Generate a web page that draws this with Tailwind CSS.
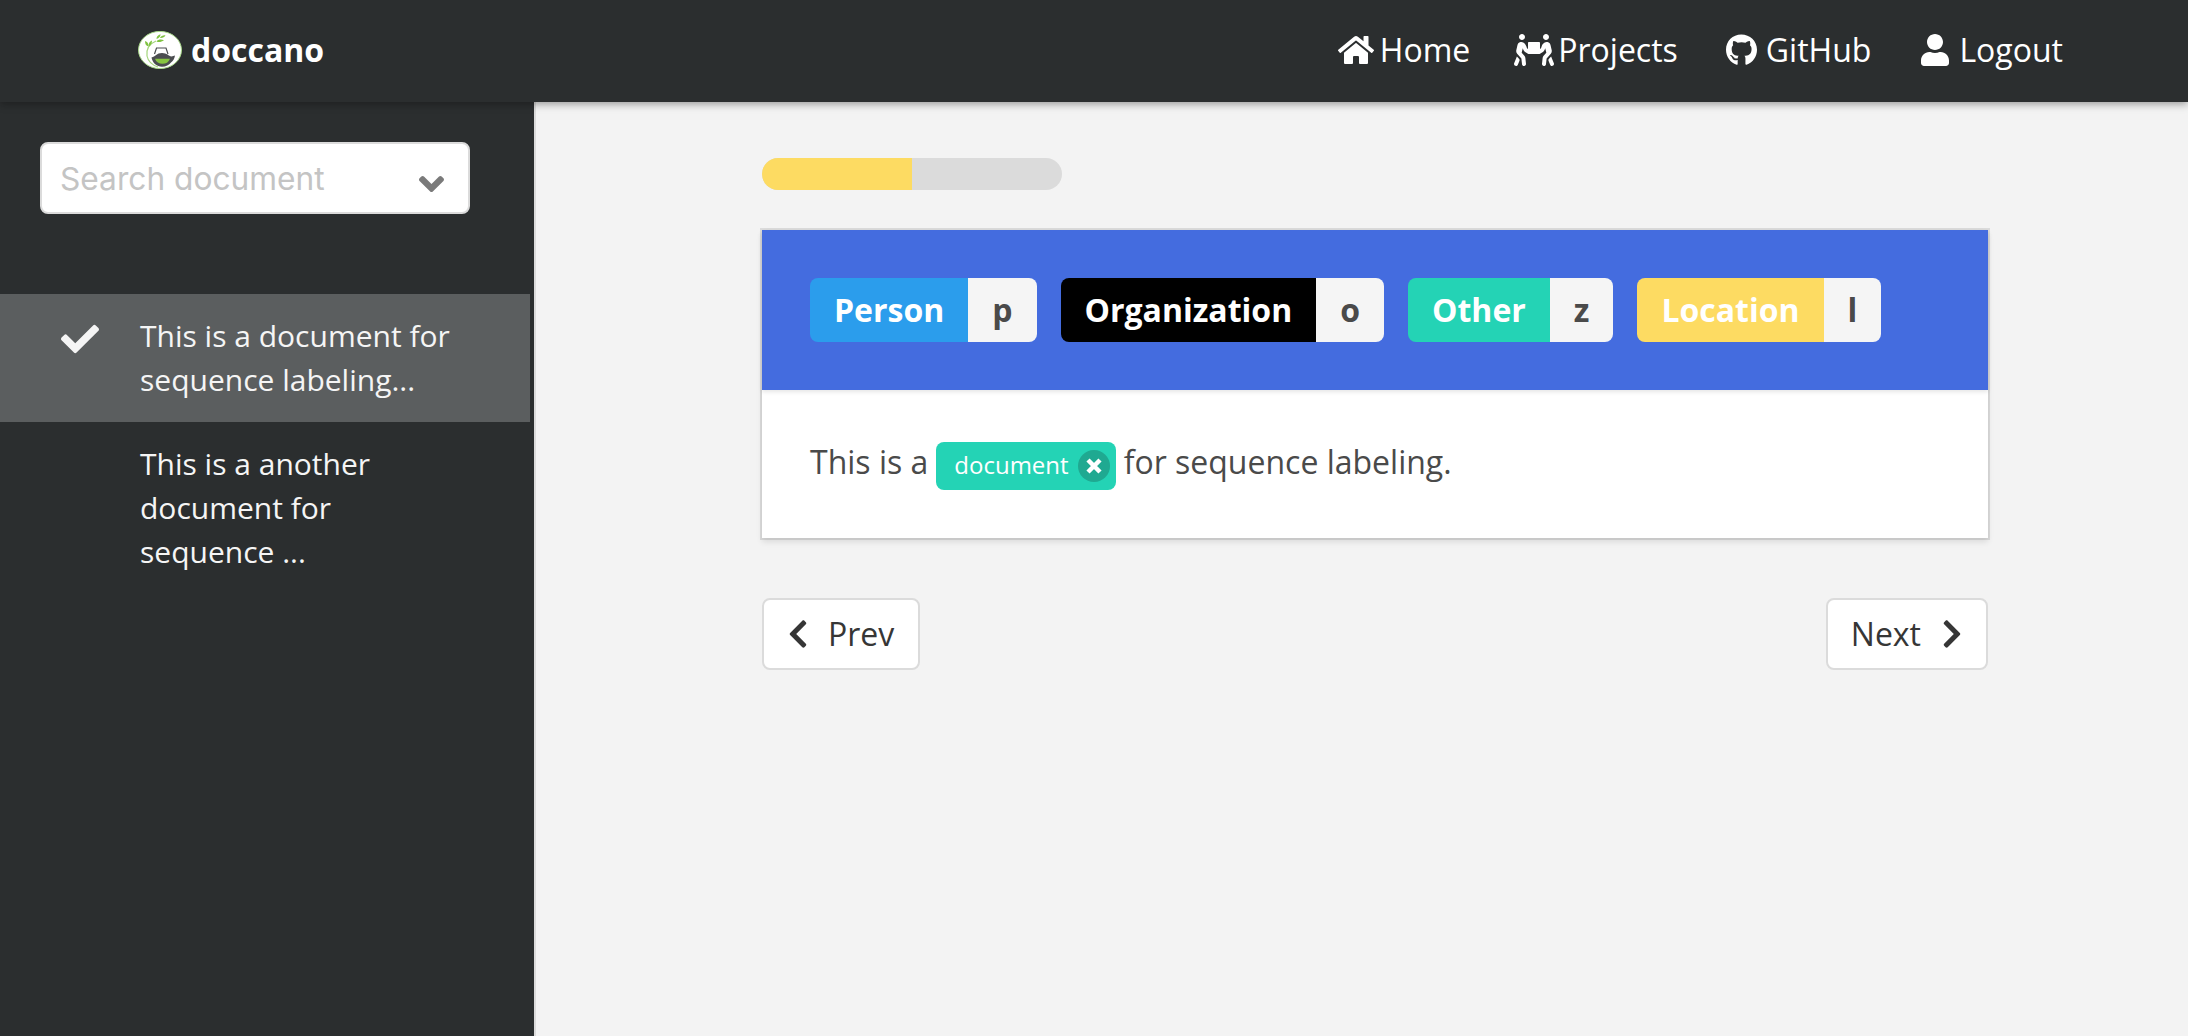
<!DOCTYPE html>
<html lang="en">
<head>
<meta charset="utf-8">
<title>doccano</title>
<script src="https://cdn.jsdelivr.net/npm/@tailwindcss/browser@4"></script>
</head>
<body class="flex h-[1036px] flex-col overflow-hidden bg-[#f3f3f3] font-['Open_Sans',sans-serif] text-[32px] leading-[48px] text-[#4a4a4a]">
  <header class="relative z-10 flex h-[102px] shrink-0 items-center justify-between bg-[#2b2e2f] pr-[125px] pb-[2px] pl-[138px] text-white shadow-[0_2px_8px_rgba(10,10,10,0.4)]">
    <a class="flex items-center gap-[9px]">
      <svg class="h-[38px] w-[44px]" viewBox="0 0 44 38">
        <ellipse cx="22" cy="19" rx="21.5" ry="18.6" fill="#fff" stroke="#a9d98a" stroke-width="1"/>
        <path d="M18 10C11 13 8 18 9 25c1 5 5 9 11 11" fill="none" stroke="#a5d67d" stroke-width="1.2"/>
        <path d="M7 10c2.500.5 3.500 2.500 3.500 5.500C8 15 7 13 7 10zM14 9.500c0 2.500-1 4.500-3 6-1-2.500.5-5 3-6zM18.500 8c0-2.500 1.500-4 4-4.700 0 2.500-1.500 4.200-4 4.700zM22 7c1-2 3-3 5.500-2.700-1 2-3 3-5.500 2.700zM18.500 10.500c1.500-2 4.500-2.500 7.500-1.300-2.500 1.800-5 2.300-7.500 1.300z" fill="#7fc241"/>
        <path d="M16.500 23l2-6h9.500l2 6" fill="none" stroke="#4b4d50" stroke-width="1.200"/>
        <path d="M13.500 26.500c4-1 5-4.500 10.500-4.500 5 0 6.500 3 9.500 3.500l3.500-1c-.5 3.500-2 5.500-4 7-2 2.700-5 4.200-9 4.200-5 0-9.500-3.500-10.500-9.200z" fill="#4b4d50"/>
        <path d="M17 27.800h15c-1.500 3.700-4 5-7.500 5s-6.500-1.600-7.500-5z" fill="#86c440"/>
      </svg>
      <span class="font-bold">doccano</span>
    </a>
    <nav class="flex gap-10">
      <a class="flex items-center">
        <span class="flex w-12 justify-center"><svg class="h-8 w-9" viewBox="0 0 576 512" fill="currentColor"><path d="M280.37 148.26L96 300.11V464a16 16 0 0 0 16 16l112.06-.29a16 16 0 0 0 15.92-16V368a16 16 0 0 1 16-16h64a16 16 0 0 1 16 16v95.64a16 16 0 0 0 16 16.05L464 480a16 16 0 0 0 16-16V300L295.67 148.26a12.19 12.19 0 0 0-15.3 0zM571.6 251.47L488 182.56V44.05a12 12 0 0 0-12-12h-56a12 12 0 0 0-12 12v72.61L318.47 43a48 48 0 0 0-61 0L4.34 251.47a12 12 0 0 0-1.6 16.9l25.5 31A12 12 0 0 0 45.15 301l235.22-193.74a12.19 12.19 0 0 1 15.3 0L530.9 301a12 12 0 0 0 16.9-1.6l25.5-31a12 12 0 0 0-1.7-16.93z"/></svg></span>
        <span>Home</span>
      </a>
      <a class="flex items-center">
        <span class="flex w-12 justify-center"><svg class="h-8 w-10" viewBox="0 0 640 512" fill="currentColor"><path d="M128 96c26.500 0 48-21.500 48-48S154.500 0 128 0 80 21.500 80 48s21.500 48 48 48zm384 0c26.500 0 48-21.500 48-48S538.500 0 512 0s-48 21.500-48 48 21.500 48 48 48zm125.700 372.100l-44-110-41.100 46.400-2 18.200 27.700 69.200c5 12.500 17 20.100 29.700 20.100 4 0 8-.7 11.900-2.300 16.400-6.600 24.400-25.200 17.800-41.600zm-34.200-209.800L585 178.100c-4.600-20-18.600-36.800-37.500-44.900-18.500-8-39-6.700-56.100 3.300-22.700 13.400-39.700 34.500-48.100 59.400L432 229.800 416 240v-96c0-8.800-7.200-16-16-16H240c-8.800 0-16 7.200-16 16v96l-16.100-10.200-11.300-33.900c-8.300-25-25.400-46-48.100-59.400-17.200-10-37.600-11.300-56.100-3.300-18.900 8.100-32.900 24.900-37.500 44.900l-18.400 80.200c-4.600 20 .7 41.200 14.400 56.700l67.200 75.900 10.100 92.600C130 499.800 143.800 512 160 512c1.200 0 2.300-.1 3.500-.2 17.600-1.900 30.200-17.700 28.300-35.300l-10.100-92.800c-1.500-13-6.900-25.100-15.600-35l-43.300-49 17.600-70.300 6.800 20.400c4.100 12.500 11.900 23.400 24.500 32.600l51.100 32.500c4.600 2.900 12.100 4.600 17.200 5h160c5.100-.4 12.600-2.100 17.200-5l51.100-32.500c12.600-9.200 20.400-20 24.500-32.600l6.800-20.400 17.600 70.300-43.300 49c-8.700 9.900-14.100 22-15.600 35l-10.100 92.800c-1.900 17.600 10.800 33.400 28.300 35.300 1.200.1 2.300.2 3.500.2 16.100 0 30-12.100 31.800-28.500l10.100-92.600 67.200-75.900c13.600-15.500 19-36.700 14.400-56.700zM46.300 358.100l-44 110c-6.600 16.400 1.400 35 17.800 41.600 16.800 6.600 35.100-1.700 41.600-17.800l27.700-69.200-2-18.200-41.100-46.400z"/></svg></span>
        <span>Projects</span>
      </a>
      <a class="flex items-center">
        <span class="flex w-12 justify-center"><svg class="h-8 w-[31px]" viewBox="0 0 496 512" fill="currentColor"><path d="M165.9 397.4c0 2-2.3 3.6-5.2 3.6-3.3.3-5.6-1.3-5.6-3.6 0-2 2.3-3.6 5.2-3.6 3-.3 5.6 1.3 5.6 3.6zm-31.1-4.500c-.7 2 1.3 4.3 4.3 4.9 2.6 1 5.6 0 6.2-2s-1.3-4.3-4.3-5.2c-2.6-.7-5.500.3-6.200 2.300zm44.2-1.700c-2.900.7-4.900 2.600-4.600 4.900.3 2 2.900 3.300 5.900 2.600 2.900-.7 4.900-2.600 4.600-4.600-.3-1.900-3-3.200-5.900-2.900zM244.800 8C106.100 8 0 113.300 0 252c0 110.900 69.800 205.800 169.500 239.200 12.800 2.300 17.300-5.600 17.300-12.100 0-6.200-.3-40.400-.3-61.400 0 0-70 15-84.700-29.800 0 0-11.400-29.100-27.800-36.600 0 0-22.900-15.700 1.600-15.400 0 0 24.900 2 38.600 25.800 21.900 38.600 58.600 27.500 72.900 20.900 2.300-16 8.800-27.100 16-33.700-55.900-6.200-112.300-14.300-112.300-110.500 0-27.500 7.600-41.300 23.600-58.900-2.600-6.500-11.100-33.300 2.600-67.900 20.900-6.500 69 27 69 27 20-5.600 41.500-8.500 62.800-8.500s42.800 2.900 62.800 8.500c0 0 48.100-33.600 69-27 13.700 34.700 5.200 61.400 2.600 67.900 16 17.700 25.800 31.500 25.800 58.900 0 96.500-58.900 104.200-114.800 110.500 9.200 7.900 17 22.900 17 46.400 0 33.700-.3 75.400-.3 83.600 0 6.500 4.600 14.400 17.300 12.100C428.200 457.800 496 362.900 496 252 496 113.300 383.500 8 244.800 8z"/></svg></span>
        <span>GitHub</span>
      </a>
      <a class="flex items-center">
        <span class="flex w-12 justify-center"><svg class="h-8 w-7" viewBox="0 0 448 512" fill="currentColor"><path d="M224 256c70.7 0 128-57.3 128-128S294.7 0 224 0 96 57.3 96 128s57.3 128 128 128zm89.6 32h-16.7c-22.2 10.2-46.9 16-72.9 16s-50.6-5.8-72.9-16h-16.7C60.200 288 0 348.200 0 422.400V464c0 26.500 21.500 48 48 48h352c26.500 0 48-21.500 48-48v-41.600c0-74.200-60.200-134.400-134.400-134.400z"/></svg></span>
        <span>Logout</span>
      </a>
    </nav>
  </header>

  <div class="flex grow">
    <aside class="w-[536px] shrink-0 border-r-2 border-[#dbdbdb] bg-[#2b2e2f] pt-10 text-[#f5f5f5]">
      <div class="mr-16 ml-10 flex h-[72px] items-center justify-between rounded-lg border-2 border-[#dbdbdb] bg-white pr-[24px] pl-[18px]">
        <span class="pt-[2px] font-['Inter',sans-serif] text-[31.7px] text-[#c4c4c4]">Search document</span>
        <svg class="mt-[11px] h-[40px] w-[25px]" viewBox="0 0 320 512" fill="#7a7a7a"><path d="M143 352.3L7 216.3c-9.4-9.4-9.4-24.6 0-33.9l22.6-22.6c9.4-9.4 24.6-9.4 33.9 0l96.4 96.4 96.4-96.4c9.4-9.4 24.6-9.4 33.9 0l22.6 22.6c9.4 9.4 9.4 24.6 0 33.9l-136 136c-9.2 9.4-24.4 9.4-33.800 0z"/></svg>
      </div>
      <ul class="mt-20 mr-1 text-[30px] leading-[44px]">
        <li class="flex bg-[#5b5e5f] py-5">
          <span class="w-[140px] shrink-0 pt-[6px] pl-[61px]"><svg class="h-[38px] w-[38px]" viewBox="0 0 512 512" fill="currentColor"><path d="M173.898 439.404l-166.400-166.400c-9.997-9.997-9.997-26.206 0-36.204l36.203-36.204c9.997-9.998 26.207-9.998 36.204 0L192 312.690 432.095 72.596c9.997-9.997 26.207-9.997 36.204 0l36.203 36.204c9.997 9.997 9.997 26.206 0 36.204l-294.400 294.401c-9.998 9.997-26.207 9.997-36.204-.001z"/></svg></span>
          <span>This is a document for<br>sequence labeling...</span>
        </li>
        <li class="flex py-5">
          <span class="w-[140px] shrink-0"></span>
          <span>This is a another<br>document for<br>sequence ...</span>
        </li>
      </ul>
    </aside>

    <main class="grow pt-14 pr-[200px] pl-[226px]">
      <div class="h-8 w-[300px] overflow-hidden rounded-full bg-[#dbdbdb]">
        <div class="h-full bg-[#fddb62]" style="width:50%"></div>
      </div>

      <section class="mt-10 bg-white shadow-[0_4px_6px_rgba(10,10,10,0.1),0_0_0_2px_rgba(10,10,10,0.1)]">
        <div class="flex h-40 items-center gap-6 bg-[#446cdf] px-12 font-bold leading-[64px] shadow-[0_2px_4px_rgba(10,10,10,0.1)]">
          <div class="flex overflow-hidden rounded-lg"><span class="bg-[#2b9dec] px-6 text-white">Person</span><span class="bg-[#f5f5f5] px-6">p</span></div>
          <div class="flex overflow-hidden rounded-lg"><span class="bg-black px-6 text-white">Organization</span><span class="bg-[#f5f5f5] px-6">o</span></div>
          <div class="flex overflow-hidden rounded-lg"><span class="bg-[#24d3b5] px-6 text-white">Other</span><span class="bg-[#f5f5f5] px-6">z</span></div>
          <div class="flex overflow-hidden rounded-lg"><span class="bg-[#fddb62] px-6 text-white">Location</span><span class="bg-[#f5f5f5] px-6">l</span></div>
        </div>
        <div class="flex h-[148px] items-start px-12 pt-12">
          <span>This is a</span>
          <span class="mx-2 mt-1 flex h-12 items-center rounded-lg bg-[#24d3b5] pr-1.5 pl-[18px] text-2xl leading-[48px] text-white"><span class="pb-[2px]">document</span>
            <span class="ml-[9px] flex size-8 items-center justify-center rounded-full bg-[#1fa991]"><svg class="size-4" viewBox="0 0 16 16" stroke="#fff" stroke-width="4.500"><path d="M2 2l12 12M14 2L2 14"/></svg></span>
          </span>
          <span>for sequence labeling.</span>
        </div>
      </section>

      <div class="mt-[60px] flex justify-between text-[#363636]">
        <a class="flex h-[72px] items-center rounded-lg border-2 border-[#dbdbdb] bg-white pr-6">
          <span class="mr-5 ml-[24px] flex w-5 justify-center"><svg class="h-8 w-5" viewBox="0 0 320 512" fill="currentColor"><path d="M34.520 239.030L228.870 44.690c9.370-9.370 24.570-9.370 33.940 0l22.670 22.670c9.360 9.360 9.370 24.520.040 33.900L131.490 256l154.020 154.750c9.340 9.380 9.320 24.540-.040 33.900l-22.670 22.670c-9.370 9.370-24.570 9.370-33.940 0L34.520 272.970c-9.370-9.370-9.370-24.570 0-33.940z"/></svg></span>
          Prev
        </a>
        <a class="flex h-[72px] items-center rounded-lg border-2 border-[#dbdbdb] bg-white pl-[23px]">
          Next
          <span class="mr-[24px] ml-[21px] flex w-5 justify-center"><svg class="h-8 w-5 -scale-x-100" viewBox="0 0 320 512" fill="currentColor"><path d="M34.520 239.030L228.870 44.690c9.370-9.370 24.570-9.370 33.940 0l22.670 22.670c9.360 9.360 9.370 24.520.040 33.900L131.490 256l154.020 154.750c9.340 9.380 9.320 24.540-.040 33.900l-22.670 22.670c-9.370 9.370-24.570 9.370-33.940 0L34.520 272.970c-9.370-9.370-9.370-24.570 0-33.940z"/></svg></span>
        </a>
      </div>
    </main>
  </div>
</body>
</html>
